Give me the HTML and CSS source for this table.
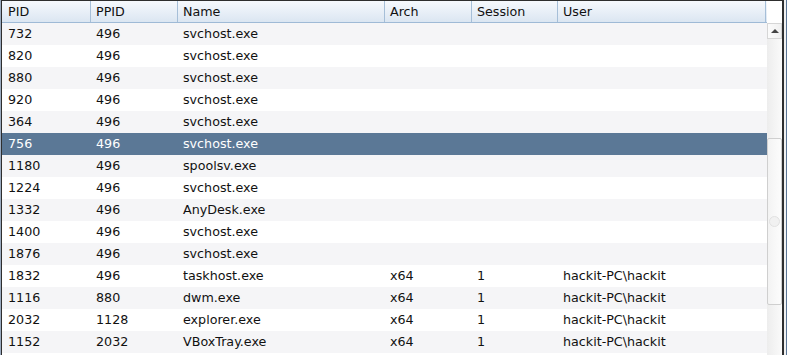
FILE: index.html
```html
<!DOCTYPE html>
<html>
<head>
<meta charset="utf-8">
<link rel="stylesheet" href="styles.css">
</head>
<body>
<div class="window">
  <div class="table">
    <div class="row head">
      <div class="hc first">PID</div>
      <div class="hc">PPID</div>
      <div class="hc">Name</div>
      <div class="hc">Arch</div>
      <div class="hc">Session</div>
      <div class="hc">User</div>
    </div>
    <div class="rows">
      <div class="row alt"><div class="c first">732</div><div class="c">496</div><div class="c">svchost.exe</div><div class="c"></div><div class="c"></div><div class="c"></div></div>
      <div class="row"><div class="c first">820</div><div class="c">496</div><div class="c">svchost.exe</div><div class="c"></div><div class="c"></div><div class="c"></div></div>
      <div class="row alt"><div class="c first">880</div><div class="c">496</div><div class="c">svchost.exe</div><div class="c"></div><div class="c"></div><div class="c"></div></div>
      <div class="row"><div class="c first">920</div><div class="c">496</div><div class="c">svchost.exe</div><div class="c"></div><div class="c"></div><div class="c"></div></div>
      <div class="row alt"><div class="c first">364</div><div class="c">496</div><div class="c">svchost.exe</div><div class="c"></div><div class="c"></div><div class="c"></div></div>
      <div class="row selected"><div class="c first">756</div><div class="c">496</div><div class="c">svchost.exe</div><div class="c"></div><div class="c"></div><div class="c"></div></div>
      <div class="row alt"><div class="c first">1180</div><div class="c">496</div><div class="c">spoolsv.exe</div><div class="c"></div><div class="c"></div><div class="c"></div></div>
      <div class="row"><div class="c first">1224</div><div class="c">496</div><div class="c">svchost.exe</div><div class="c"></div><div class="c"></div><div class="c"></div></div>
      <div class="row alt"><div class="c first">1332</div><div class="c">496</div><div class="c">AnyDesk.exe</div><div class="c"></div><div class="c"></div><div class="c"></div></div>
      <div class="row"><div class="c first">1400</div><div class="c">496</div><div class="c">svchost.exe</div><div class="c"></div><div class="c"></div><div class="c"></div></div>
      <div class="row alt"><div class="c first">1876</div><div class="c">496</div><div class="c">svchost.exe</div><div class="c"></div><div class="c"></div><div class="c"></div></div>
      <div class="row"><div class="c first">1832</div><div class="c">496</div><div class="c">taskhost.exe</div><div class="c">x64</div><div class="c">1</div><div class="c">hackit-PC\hackit</div></div>
      <div class="row alt"><div class="c first">1116</div><div class="c">880</div><div class="c">dwm.exe</div><div class="c">x64</div><div class="c">1</div><div class="c">hackit-PC\hackit</div></div>
      <div class="row"><div class="c first">2032</div><div class="c">1128</div><div class="c">explorer.exe</div><div class="c">x64</div><div class="c">1</div><div class="c">hackit-PC\hackit</div></div>
      <div class="row alt"><div class="c first">1152</div><div class="c">2032</div><div class="c">VBoxTray.exe</div><div class="c">x64</div><div class="c">1</div><div class="c">hackit-PC\hackit</div></div>
      <div class="row"><div class="c first"></div><div class="c"></div><div class="c"></div><div class="c"></div><div class="c"></div><div class="c"></div></div>
    </div>
  </div>
  <div class="scroll">
    <div class="corner"></div>
    <div class="btn-up"><span class="tri"></span></div>
    <div class="track">
      <div class="thumb"><span class="grip"></span></div>
    </div>
  </div>
</div>
</body>
</html>
```
FILE: styles.css
```css
html, body {
  margin: 0;
  padding: 0;
  background: #ffffff;
}
.window {
  width: 787px;
  height: 355px;
  box-sizing: border-box;
  display: flex;
  overflow: hidden;
  border-left: 1px solid #9aaabf;
  border-right: 1px solid #5b7696;
  font-family: "DejaVu Sans", sans-serif;
  font-size: 12.7px;
  color: #111;
}
.table {
  width: 765px;
  border-left: 1px solid #2e2e2e;
  border-top: 1px solid #2e2e2e;
  display: flex;
  flex-direction: column;
  overflow: hidden;
}
.row {
  display: grid;
  grid-template-columns: 89px 87px 207px 87px 86px 208px;
  height: 22px;
  flex: none;
}
.head {
  height: 22px;
  box-sizing: border-box;
  border-bottom: 1px solid #9fbad6;
  background: linear-gradient(#f6f9fd, #dbe6f2);
}
.hc {
  box-sizing: border-box;
  border-right: 1px solid #a6bfd8;
  padding-left: 5px;
  line-height: 21px;
  white-space: nowrap;
}
.hc.first, .c.first {
  padding-left: 6px;
}
.rows {
  display: flex;
  flex-direction: column;
  background: #fff;
}
.row.alt {
  background: #f5f5f7;
}
.row.selected {
  background: #5b7896;
  color: #fff;
}
.c {
  padding-left: 5px;
  line-height: 22px;
  white-space: nowrap;
  overflow: hidden;
}
.scroll {
  width: 15px;
  display: flex;
  flex-direction: column;
  border-top: 1px solid #2e2e2e;
  border-right: 2px solid #2e2e2e;
  margin-right: 2px;
  flex: none;
  position: relative;
}
.scroll::after {
  content: "";
  position: absolute;
  top: -1px;
  bottom: 0;
  right: -4px;
  width: 2px;
  background: #f0f0f0;
}
.corner {
  height: 22px;
  background: #fff;
  flex: none;
}
.btn-up {
  height: 16px;
  box-sizing: border-box;
  border: 1px solid #d6d6d6;
  background: linear-gradient(90deg, #fbfbfb, #f0f0f0);
  display: flex;
  align-items: center;
  justify-content: center;
  flex: none;
}
.tri {
  width: 0;
  height: 0;
  border-left: 4px solid transparent;
  border-right: 4px solid transparent;
  border-bottom: 4px solid #444;
}
.track {
  flex: 1;
  background: linear-gradient(90deg, #ededed, #fafafa);
  padding-top: 99px;
}
.thumb {
  height: 167px;
  box-sizing: border-box;
  border: 1px solid #cfcfcf;
  border-radius: 2px;
  background: linear-gradient(90deg, #f3f3f3, #fcfcfc);
  display: flex;
  align-items: center;
  justify-content: center;
}
.grip {
  width: 9px;
  height: 9px;
  border-radius: 50%;
  border: 1px solid #e2e2e2;
  background: #f1f1f1;
}
```
